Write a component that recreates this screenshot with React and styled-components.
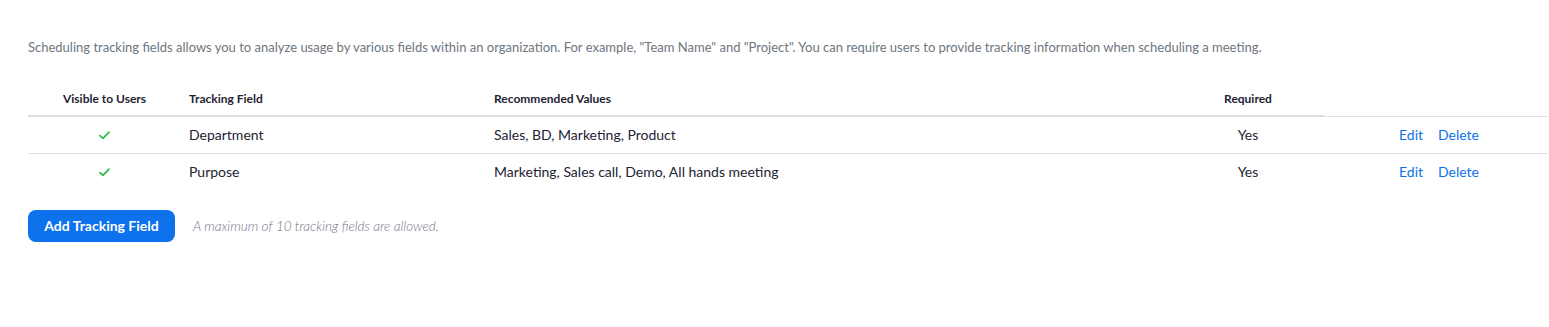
import React from 'react';
import styled, { createGlobalStyle } from 'styled-components';

const GlobalStyle = createGlobalStyle`
  body {
    margin: 0;
    background: #ffffff;
    font-family: Lato, "Open Sans", sans-serif;
    color: #232333;
  }
`;

const Page = styled.div`
  padding: 37px 1px 40px 28px;
`;

const Intro = styled.p`
  margin: 0 0 23px;
  font-size: 13px;
  line-height: 20px;
  color: #6e7680;
`;

const columns = '153px 305px 686px 152px 1fr';

const HeadRow = styled.div`
  display: grid;
  grid-template-columns: ${columns};
  align-items: end;
`;

const HeadCell = styled.div`
  padding: 11px 8px 8px;
  font-size: 12px;
  line-height: 16px;
  font-weight: 700;
  color: #232333;
  text-align: ${(p) => p.$align || 'left'};
  border-bottom: ${(p) => (p.$thin ? '1px solid #e2e2e2' : '2px solid #dedede')};
  min-height: 16px;
`;

const Row = styled.div`
  display: grid;
  grid-template-columns: ${columns};
  align-items: center;
  height: 36px;
  border-bottom: ${(p) => (p.$last ? 'none' : '1px solid #e2e2e2')};
`;

const Cell = styled.div`
  padding: 0 8px;
  font-size: 14px;
  line-height: 20px;
  color: #232333;
  display: flex;
  justify-content: ${(p) => p.$justify || 'flex-start'};
`;

const Actions = styled(Cell)`
  justify-content: center;
  gap: 15px;
  padding: 0 6px 0 12px;
`;

const Action = styled.a`
  color: #0e71eb;
  text-decoration: none;
  cursor: pointer;
`;

const Footer = styled.div`
  display: flex;
  align-items: center;
  gap: 18px;
  margin-top: 20px;
`;

const Button = styled.button`
  width: 147px;
  height: 32px;
  padding: 0 0 1px;
  border: none;
  border-radius: 8px;
  background: #0e72ed;
  color: #ffffff;
  font-family: Lato, "Open Sans", sans-serif;
  font-size: 14px;
  font-weight: 700;
  cursor: pointer;
`;

const Note = styled.span`
  font-size: 13.5px;
  font-style: italic;
  font-weight: 300;
  color: #747487;
`;

const Check = () => (
  <svg width="11" height="9" viewBox="0 0 11 9" fill="none">
    <path d="M1 4.6 L4 7.4 L10 1.2" stroke="#2fbf47" strokeWidth="1.8" strokeLinecap="round" strokeLinejoin="round" />
  </svg>
);

const fields = [
  { name: 'Department', values: 'Sales, BD, Marketing, Product', required: 'Yes' },
  { name: 'Purpose', values: 'Marketing, Sales call, Demo, All hands meeting', required: 'Yes' },
];

export default function App() {
  return (
    <Page>
      <GlobalStyle />
      <Intro>
        Scheduling tracking fields allows you to analyze usage by various fields within an organization. For example, "Team Name" and "Project". You can require users to provide tracking information when scheduling a meeting.
      </Intro>
      <HeadRow>
        <HeadCell $align="center">Visible to Users</HeadCell>
        <HeadCell>Tracking Field</HeadCell>
        <HeadCell>Recommended Values</HeadCell>
        <HeadCell $align="center">Required</HeadCell>
        <HeadCell $thin />
      </HeadRow>
      {fields.map((f, i) => (
        <Row key={f.name} $last={i === fields.length - 1}>
          <Cell $justify="center"><Check /></Cell>
          <Cell>{f.name}</Cell>
          <Cell>{f.values}</Cell>
          <Cell $justify="center">{f.required}</Cell>
          <Actions>
            <Action>Edit</Action>
            <Action>Delete</Action>
          </Actions>
        </Row>
      ))}
      <Footer>
        <Button>Add Tracking Field</Button>
        <Note>A maximum of 10 tracking fields are allowed.</Note>
      </Footer>
    </Page>
  );
}
